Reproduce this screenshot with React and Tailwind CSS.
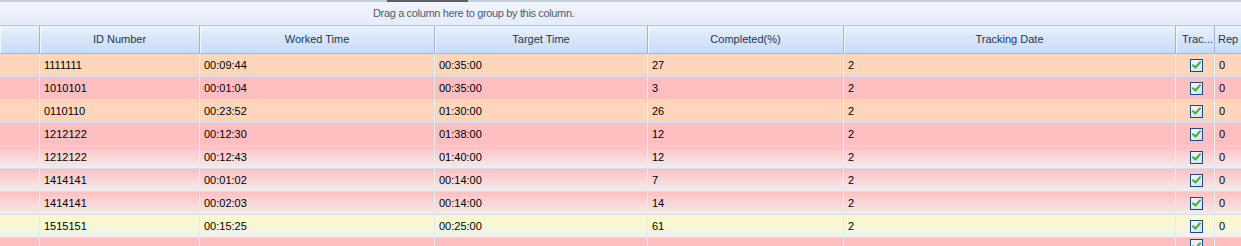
const rows = [
  { id: '1111111', worked: '00:09:44', target: '00:35:00', pct: '27', bg: 'bg-[#fdd6bc]' },
  { id: '1010101', worked: '00:01:04', target: '00:35:00', pct: '3', bg: 'bg-[#ffbfc0]' },
  { id: '0110110', worked: '00:23:52', target: '01:30:00', pct: '26', bg: 'bg-[#fdd6bc]' },
  { id: '1212122', worked: '00:12:30', target: '01:38:00', pct: '12', bg: 'bg-[#ffbfc0]' },
  { id: '1212122', worked: '00:12:43', target: '01:40:00', pct: '12', bg: 'bg-gradient-to-b from-[#ffc0c1] to-[#f1ecec]' },
  { id: '1414141', worked: '00:01:02', target: '00:14:00', pct: '7', bg: 'bg-gradient-to-b from-[#ffc0c1] to-[#f1ecec]' },
  { id: '1414141', worked: '00:02:03', target: '00:14:00', pct: '14', bg: 'bg-gradient-to-b from-[#ffc0c1] to-[#f1ecec]' },
  { id: '1515151', worked: '00:15:25', target: '00:25:00', pct: '61', bg: 'bg-gradient-to-b from-[#fdfac6] to-[#f2f3e9]' },
  { id: '', worked: '', target: '', pct: '', bg: 'bg-[#ffbfc0]', partial: true },
];

const cols = 'grid grid-cols-[40px_160px_235px_213px_196px_332px_39px_1fr]';

function Check() {
  return (
    <div className="w-[13px] h-[13px] border border-[#1c4a85] bg-gradient-to-br from-[#f4f7fb] to-[#d9e2ee] flex items-center justify-center">
      <svg width="9" height="8" viewBox="0 0 9 8">
        <path d="M1 4.2 L3.4 6.5 L8 1.3" fill="none" stroke="#3fae3a" strokeWidth="2" strokeLinecap="round" strokeLinejoin="round" />
      </svg>
    </div>
  );
}

function Cell({ children, className = '' }) {
  return (
    <div className={`border-r border-[#e3ebf6] pl-1 flex items-center overflow-hidden whitespace-nowrap ${className}`}>
      {children}
    </div>
  );
}

export default function App() {
  const headers = ['', 'ID Number', 'Worked Time', 'Target Time', 'Completed(%)', 'Tracking Date'];
  return (
    <div className="w-[1241px] h-[246px] overflow-hidden bg-white text-[11px] text-black" style={{ fontFamily: '"Liberation Sans", Arial, sans-serif' }}>
      {/* barre du haut */}
      <div className="h-[2px] bg-[#c6ced9] relative">
        <div className="absolute left-[387px] top-0 w-[81px] h-[2px] bg-[#5b5e63]" />
      </div>

      {/* zone de regroupement */}
      <div className="h-[24px] bg-gradient-to-b from-[#f1f5fc] to-[#e5ecf8] border-b border-[#b7c8e1] flex items-center pl-[373px]">
        <span className="text-[#4d5c70] tracking-[-0.35px] whitespace-nowrap">Drag a column here to group by this column.</span>
      </div>

      {/* entête */}
      <div className={`${cols} h-[28px] bg-gradient-to-b from-[#e9f1fd] to-[#c8dbf4] border-b border-[#a9bdd9] text-[#1b3559]`}>
        {headers.map((h, i) => (
          <div key={i} className="border-r border-[#9fb4d2] shadow-[inset_1px_0_0_#f4f8ff] flex items-center justify-center">
            {h}
          </div>
        ))}
        <div className="border-r border-[#9fb4d2] shadow-[inset_1px_0_0_#f4f8ff] flex items-center pl-[6px] overflow-hidden">Trac...</div>
        <div className="flex items-center pl-[3px] overflow-hidden whitespace-nowrap">Rep</div>
      </div>

      {/* lignes */}
      {rows.map((r, i) => (
        <div key={i} className={`${cols} h-[23px] border-b border-[#d0ddf0] ${r.bg}`}>
          <Cell />
          <Cell>{r.id}</Cell>
          <Cell>{r.worked}</Cell>
          <Cell>{r.target}</Cell>
          <Cell>{r.pct}</Cell>
          <Cell>{r.partial ? '' : '2'}</Cell>
          <div className={`border-r border-[#e3ebf6] flex justify-center pl-[2px] ${r.partial ? 'items-start pt-[1px]' : 'items-center'}`}>
            <Check />
          </div>
          <div className="pl-1 flex items-center">{r.partial ? '' : '0'}</div>
        </div>
      ))}
    </div>
  );
}
